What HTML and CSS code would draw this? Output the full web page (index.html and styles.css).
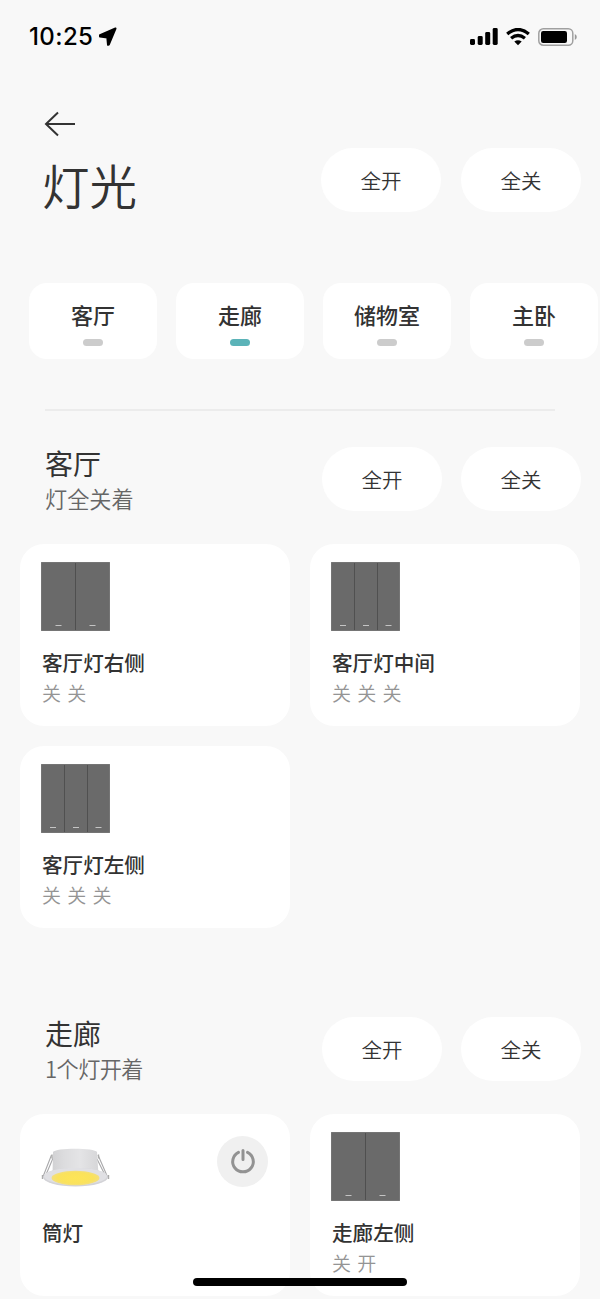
FILE: index.html
```html
<!DOCTYPE html>
<html lang="zh-CN">
<head>
    <meta charset="UTF-8">
    <meta name="viewport" content="width=device-width, initial-scale=1.0">
    <title>灯光</title>
    <link rel="stylesheet" href="styles.css">
</head>
<body>

<!-- switch panels and lamp, reused by the cards -->
<svg class="sprite" width="0" height="0">
    <symbol id="switch2" viewBox="0 0 69 69">
        <rect width="69" height="69" rx="1" fill="#6a6a6a"/>
        <rect x=".5" y=".5" width="68" height="68" rx=".5" fill="none" stroke="#757575"/>
        <path d="M34.5 1v67" stroke="#4f4f4f"/>
        <path d="M14.500 63.500h6M48.500 63.500h6" stroke="#c4c4c4"/>
    </symbol>
    <symbol id="switch3" viewBox="0 0 69 69">
        <rect width="69" height="69" rx="1" fill="#6a6a6a"/>
        <rect x=".5" y=".5" width="68" height="68" rx=".5" fill="none" stroke="#757575"/>
        <path d="M23.500 1v67M46.500 1v67" stroke="#505050"/>
        <path d="M9 63.500h6M32 63.500h6M54.500 63.500h6" stroke="#c4c4c4"/>
    </symbol>
    <symbol id="downlight" viewBox="0 0 69 69">
        <defs>
            <linearGradient id="shell" x1="0" x2="1" y1="0" y2="0">
                <stop offset="0" stop-color="#d2d2d4"/>
                <stop offset=".25" stop-color="#dcdcde"/>
                <stop offset=".6" stop-color="#e4e4e6"/>
                <stop offset="1" stop-color="#d6d6d8"/>
            </linearGradient>
            <radialGradient id="glow">
                <stop offset="0" stop-color="#fde558"/>
                <stop offset=".75" stop-color="#fae25c"/>
                <stop offset="1" stop-color="#f3df7d"/>
            </radialGradient>
        </defs>
        <path d="M10.500 23L1.500 46M12.500 25L4 45M57 23L67 46M56 27L65 45" fill="none" stroke="#a9a9ab" stroke-width="1.100"/>
        <path d="M11 22.500v4M57.500 22.500v4M1.500 43v4M67.500 43v4" stroke="#aaa" stroke-width="1.400"/>
        <path d="M12 20C14 15.500 54 15.500 56 20L57.500 43H11.500z" fill="url(#shell)"/>
        <ellipse cx="34.500" cy="45.200" rx="32.500" ry="9.300" fill="#d3d3d7"/>
        <ellipse cx="34.500" cy="44.300" rx="31.500" ry="8.500" fill="#e0e0e4"/>
        <ellipse cx="34.500" cy="46" rx="24" ry="7.200" fill="url(#glow)"/>
    </symbol>
</svg>

<div class="statusbar">
    <div class="clock">
        <span>10:25</span>
        <svg width="20" height="20" viewBox="0 0 20 20"><path d="M17.500 1.500L2 8.200 2 9.500 9.300 10.500 10 17.800 10.800 17.500z" stroke="#000" stroke-width="2" stroke-linejoin="round"/></svg>
    </div>
    <div class="signals">
        <svg width="28" height="18" viewBox="0 0 28 18">
            <rect x="0" y="11" width="5" height="6" rx="1.400"/>
            <rect x="7.700" y="8" width="5" height="9" rx="1.400"/>
            <rect x="15.200" y="4" width="5" height="13" rx="1.400"/>
            <rect x="22.700" y="0" width="5" height="17" rx="1.400"/>
        </svg>
        <svg width="24" height="18" viewBox="0 0 24 18">
            <path d="M1.200 6Q12-3 22.800 6M5.100 10.300Q12 4.600 18.900 10.300" fill="none" stroke="#000" stroke-width="3.300"/>
            <path d="M12 17.300L8.300 13.600q3.700-2.800 7.400 0z"/>
        </svg>
        <svg width="39" height="18" viewBox="0 0 39 18">
            <rect x=".8" y=".8" width="34" height="16.400" rx="4.500" fill="none" stroke="#a0a0a0" stroke-width="1.500"/>
            <rect x="3" y="3" width="26" height="12" rx="2.200"/>
            <path d="M36.800 6q2 .8 2 3t-2 3z" fill="#999"/>
        </svg>
    </div>
</div>

<div class="header">
    <div>
        <svg class="back" width="32" height="26" viewBox="0 0 32 26"><path d="M14 1.500L2 13l12 11.500M2 13h29" fill="none" stroke="#333" stroke-width="2"/></svg>
        <h1>灯光</h1>
    </div>
    <div class="actions">
        <button>全开</button>
        <button>全关</button>
    </div>
</div>

<div class="rooms">
    <div class="room">客厅<i></i></div>
    <div class="room on">走廊<i></i></div>
    <div class="room">储物室<i></i></div>
    <div class="room">主卧<i></i></div>
</div>

<div class="divider"></div>

<div class="section">
    <div class="section-head">
        <div>
            <h2>客厅</h2>
            <p>灯全关着</p>
        </div>
        <div class="actions">
            <button>全开</button>
            <button>全关</button>
        </div>
    </div>
    <div class="cards">
        <div class="card">
            <svg class="device"><use href="#switch2"/></svg>
            <h3>客厅灯右侧</h3>
            <p>关 关</p>
        </div>
        <div class="card">
            <svg class="device"><use href="#switch3"/></svg>
            <h3>客厅灯中间</h3>
            <p>关 关 关</p>
        </div>
        <div class="card">
            <svg class="device"><use href="#switch3"/></svg>
            <h3>客厅灯左侧</h3>
            <p>关 关 关</p>
        </div>
    </div>
</div>

<div class="section">
    <div class="section-head">
        <div>
            <h2>走廊</h2>
            <p class="lit">1个灯开着</p>
        </div>
        <div class="actions">
            <button>全开</button>
            <button>全关</button>
        </div>
    </div>
    <div class="cards">
        <div class="card">
            <div class="card-top">
                <svg class="device"><use href="#downlight"/></svg>
                <div class="power">
                    <svg width="26" height="26" viewBox="0 0 26 26"><path d="M8.500 3.300a10.300 10.300 0 1 0 9 0M13 1.500v9" fill="none" stroke="#929292" stroke-width="3" stroke-linecap="round"/></svg>
                </div>
            </div>
            <h3>筒灯</h3>
        </div>
        <div class="card">
            <svg class="device"><use href="#switch2"/></svg>
            <h3>走廊左侧</h3>
            <p>关 开</p>
        </div>
    </div>
</div>

<div class="home-bar"></div>

</body>
</html>
```
FILE: styles.css
```css
* {
    box-sizing: border-box;
}

body {
    font-family: "Noto Sans CJK SC", sans-serif;
    margin: 0;
    height: 1299px;
    overflow: hidden;
    position: relative;
    background-color: #f8f8f8;
    color: #333;
}

h1, h2, h3, p {
    margin: 0;
}

svg {
    display: block;
}

.sprite {
    position: absolute;
}

.statusbar {
    display: flex;
    justify-content: space-between;
    height: 74px;
    padding: 0 23px 0 29px;
    align-items: center;
    color: #000;
}

.clock {
    display: flex;
    align-items: center;
    gap: 5px;
    font: 550 24px/28px Inter, sans-serif;
    letter-spacing: 0.4px;
}

.signals {
    display: flex;
    align-items: center;
    gap: 8px;
}

.header {
    display: flex;
    justify-content: space-between;
    align-items: flex-end;
    height: 138px;
    padding: 0 19px 0 42px;
}

.back {
    margin: 0 0 21px 2px;
}

h1 {
    font-size: 47.5px;
    font-weight: 350;
    line-height: 54px;
}

.actions {
    display: flex;
    gap: 20px;
}

.section .actions {
    gap: 19px;
}

button {
    font-family: inherit;
    width: 120px;
    height: 64px;
    padding: 0 0 1px;
    border: none;
    border-radius: 32px;
    background-color: white;
    color: #333;
    font-size: 20.5px;
    font-weight: 350;
    cursor: pointer;
}

.rooms {
    display: flex;
    gap: 19px;
    margin: 71px 0 0 29px;
}

.room {
    flex: none;
    width: 128px;
    height: 76px;
    padding-top: 15px;
    border-radius: 18px;
    background-color: white;
    font-size: 22px;
    font-weight: 500;
    line-height: 32px;
    text-align: center;
}

.room i {
    display: block;
    width: 20px;
    height: 7px;
    margin: 9px auto 0;
    border-radius: 3.5px;
    background-color: #ccc;
}

.room.on i {
    background-color: #5bb3b8;
}

.divider {
    height: 2px;
    margin: 50px 45px 0;
    background-color: #ececec;
}

.section {
    padding: 36px 20px 0;
}

.section + .section {
    padding-top: 89px;
}

.section-head {
    display: flex;
    justify-content: space-between;
    height: 97px;
    padding-left: 25px;
    margin-right: -1px;
}

h2 {
    font-size: 28px;
    font-weight: 400;
    line-height: 32px;
}

.section-head p {
    font-size: 22.2px;
    font-weight: 350;
    line-height: 39px;
    color: #666;
}

.section-head .lit {
    letter-spacing: -0.6px;
}

.cards {
    display: grid;
    grid-template-columns: 270px 270px;
    gap: 20px;
}

.card {
    height: 182px;
    padding: 18px 22px 0;
    border-radius: 24px;
    background-color: white;
}

.device {
    width: 69px;
    height: 69px;
    margin-left: -1px;
}

.card-top {
    display: flex;
    justify-content: space-between;
}

.power {
    display: flex;
    align-items: center;
    justify-content: center;
    width: 51px;
    height: 51px;
    margin-top: 4px;
    border-radius: 50%;
    background-color: #f0f0f0;
}

h3 {
    margin-top: 15px;
    font-size: 20.6px;
    font-weight: 500;
    line-height: 32px;
}

.card p {
    font-size: 19px;
    font-weight: 350;
    line-height: 29px;
    word-spacing: 2px;
    color: #949494;
}

.home-bar {
    position: absolute;
    left: 193px;
    top: 1278px;
    width: 214px;
    height: 8px;
    border-radius: 4px;
    background-color: #000;
}
```
